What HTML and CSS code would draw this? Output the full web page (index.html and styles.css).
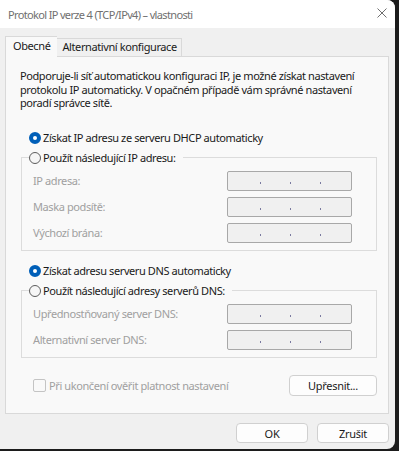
FILE: index.html
```html
<!DOCTYPE html>
<html lang="cs">
<head>
  <meta charset="UTF-8">
  <title>Protokol IP verze 4 (TCP/IPv4) – vlastnosti</title>
  <link rel="stylesheet" href="styles.css">
</head>
<body>
  <div class="window">
    <div class="titlebar">
      <span class="title">Protokol IP verze 4 (TCP/IPv4) – vlastnosti</span>
      <svg class="close" width="10" height="10" viewBox="0 0 10 10">
        <path d="M0.5 0.5 L9.5 9.5 M9.5 0.5 L0.5 9.5" stroke="#6f6f6f" stroke-width="1" fill="none"/>
      </svg>
    </div>

    <div class="content">
      <div class="tabs">
        <div class="tab active">Obecné</div>
        <div class="tab">Alternativní konfigurace</div>
      </div>

      <div class="panel">
        <p class="intro">Podporuje-li síť automatickou konfiguraci IP, je možné získat nastavení protokolu IP automaticky. V opačném případě vám správné nastavení poradí správce sítě.</p>

        <div class="option first"><span class="radio on"></span>Získat IP adresu ze serveru DHCP automaticky</div>
        <fieldset class="group">
          <legend class="option"><span class="radio"></span>Použít následující IP adresu:</legend>
          <div class="field"><span>IP adresa:</span><span class="ip"><i></i><i></i><i></i></span></div>
          <div class="field"><span>Maska podsítě:</span><span class="ip"><i></i><i></i><i></i></span></div>
          <div class="field"><span>Výchozí brána:</span><span class="ip"><i></i><i></i><i></i></span></div>
        </fieldset>

        <div class="option second"><span class="radio on"></span>Získat adresu serveru DNS automaticky</div>
        <fieldset class="group">
          <legend class="option"><span class="radio"></span>Použít následující adresy serverů DNS:</legend>
          <div class="field"><span>Upřednostňovaný server DNS:</span><span class="ip"><i></i><i></i><i></i></span></div>
          <div class="field"><span>Alternativní server DNS:</span><span class="ip"><i></i><i></i><i></i></span></div>
        </fieldset>

        <div class="bottom-row">
          <div class="check"><span class="box"></span>Při ukončení ověřit platnost nastavení</div>
          <button class="btn advanced">Upřesnit...</button>
        </div>
      </div>

      <div class="footer">
        <button class="btn">OK</button>
        <button class="btn">Zrušit</button>
      </div>
    </div>
  </div>
</body>
</html>
```

FILE: styles.css
```css
body {
  margin: 0;
  background: #1c1c1c;
}
.window {
  width: 395px;
  height: 449px;
  background: #f0f0f0;
  border-radius: 0 8px 8px 0;
  overflow: hidden;
  font-family: "Segoe UI", "Noto Sans", sans-serif;
  font-size: 11px;
  letter-spacing: -0.4px;
  color: #1a1a1a;
}
.titlebar {
  height: 28px;
  background: #fff;
  display: flex;
  align-items: center;
  justify-content: space-between;
  padding: 0 8px 0 8px;
}
.title {
  font-size: 11px;
  letter-spacing: -0.65px;
  color: #707070;
}
.close {
  margin-top: -2px;
}
.content {
  padding: 0 6px 0 5px;
}
.tabs {
  display: flex;
  align-items: flex-end;
  height: 28px;
}
.tab {
  height: 17px;
  line-height: 16px;
  padding: 0 4px 0 5px;
  border-top: 1px solid #d9d9d9;
  border-right: 1px solid #d9d9d9;
}
.tab.active {
  position: relative;
  z-index: 1;
  height: 20px;
  line-height: 17px;
  margin-bottom: -1px;
  padding: 0 7px;
  border-left: 1px solid #d9d9d9;
  background: #f9f9f9;
  border-right: none;
}
.panel {
  height: 358px;
  box-sizing: border-box;
  border: 1px solid #d9d9d9;
  background: #f9f9f9;
  padding: 12px 11px 0 14px;
}
.intro {
  margin: 0;
  line-height: 13.5px;
}
.option {
  display: flex;
  align-items: center;
  height: 14px;
}
.option.first {
  margin: 21px 0 0 9px;
}
.option.second {
  margin: 13px 0 0 9px;
}
.radio {
  width: 10px;
  height: 10px;
  border-radius: 50%;
  border: 1px solid #5c5c5c;
  background: #f6f6f6;
  margin-right: 2px;
}
.radio.on {
  width: 4px;
  height: 4px;
  border: 4px solid #005fb8;
  background: #fff;
}
.group {
  margin: 6px 0 0 1px;
  padding: 0 24px 7px 11px;
  border: 1px solid #dcdcdc;
}
.group legend {
  margin-left: -4px;
  padding: 0 7px 0 0;
}
.field {
  display: flex;
  align-items: center;
  justify-content: space-between;
  height: 20px;
  margin-top: 6px;
  color: #a0a0a0;
}
.ip {
  width: 125px;
  height: 20px;
  box-sizing: border-box;
  border: 1px solid #a8a8a8;
  border-radius: 2px;
  background: #f0f0f0;
  display: flex;
  align-items: flex-end;
  gap: 29px;
  padding: 0 0 6px 32px;
}
.ip i {
  width: 1px;
  height: 2px;
  background: #7a7aa0;
}
.bottom-row {
  display: flex;
  align-items: center;
  justify-content: space-between;
  margin: 17px 0 0 13px;
}
.check {
  display: flex;
  align-items: center;
  color: #a0a0a0;
}
.box {
  width: 11px;
  height: 11px;
  border: 1px solid #c4c4c4;
  border-radius: 2px;
  margin-right: 3px;
}
.btn {
  height: 20px;
  width: 72px;
  box-sizing: border-box;
  border: 1px solid #d0d0d0;
  border-radius: 4px;
  background: #fdfdfd;
  font-family: inherit;
  font-size: 11px;
  letter-spacing: -0.3px;
  color: #1a1a1a;
  padding: 0;
}
.btn.advanced {
  width: 88px;
  height: 21px;
}
.footer {
  display: flex;
  justify-content: flex-end;
  gap: 9px;
  padding-top: 9px;
}
```
